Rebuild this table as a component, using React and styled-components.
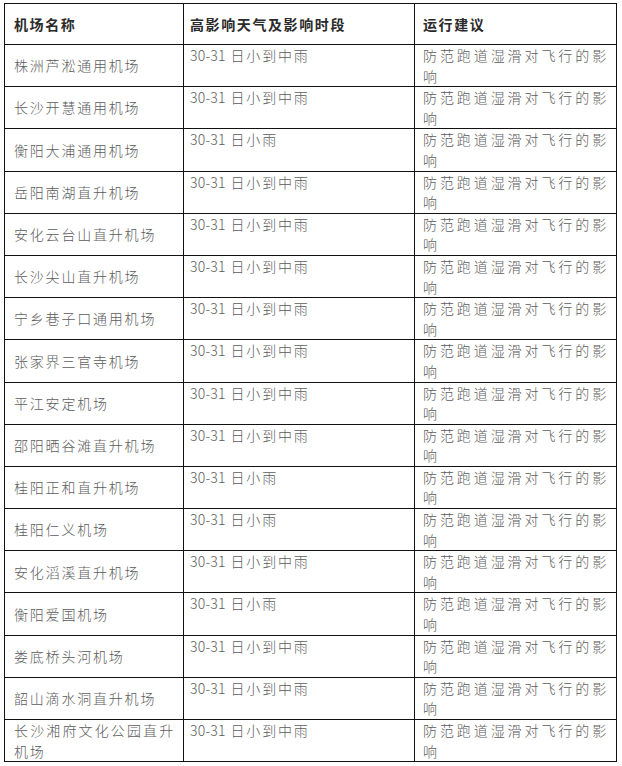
import React from "react";
import styled, { createGlobalStyle } from "styled-components";

const GlobalStyle = createGlobalStyle`
  body {
    margin: 0;
    background: #fff;
    font-family: "Noto Sans CJK SC", "Noto Sans", sans-serif;
  }
`;

const Page = styled.div`
  padding: 3px 0 0 4px;
`;

const Table = styled.table`
  border-collapse: collapse;
  table-layout: fixed;
  width: 612px;
`;

const Col = styled.col`
  width: ${(p) => p.$w}px;
`;

const HeadCell = styled.th`
  border: 1px solid #111;
  height: 40px;
  padding: 0 ${(p) => p.$pad || 8}px;
  text-align: left;
  vertical-align: middle;
  font-size: 14px;
  font-weight: 700;
  letter-spacing: 1.6px;
  color: #2a2a2a;
  line-height: 20.6px;
`;

const Cell = styled.td`
  border: 1px solid #111;
  padding: 0 8px 0 ${(p) => p.$pad || 8}px;
  vertical-align: ${(p) => (p.$middle ? "middle" : "top")};
  font-size: 14px;
  font-weight: 300;
  letter-spacing: 1.8px;
  line-height: 20.6px;
  color: #5c5c5c;
  text-align: justify;
  text-justify: inter-character;
  height: 41.2px;
  word-break: break-all;
`;

const Digits = styled.span`
  letter-spacing: 0.2px;
`;

const rows = [
  ["株洲芦淞通用机场", "小到中雨"],
  ["长沙开慧通用机场", "小到中雨"],
  ["衡阳大浦通用机场", "小雨"],
  ["岳阳南湖直升机场", "小到中雨"],
  ["安化云台山直升机场", "小到中雨"],
  ["长沙尖山直升机场", "小到中雨"],
  ["宁乡巷子口通用机场", "小到中雨"],
  ["张家界三官寺机场", "小到中雨"],
  ["平江安定机场", "小到中雨"],
  ["邵阳晒谷滩直升机场", "小到中雨"],
  ["桂阳正和直升机场", "小雨"],
  ["桂阳仁义机场", "小雨"],
  ["安化滔溪直升机场", "小到中雨"],
  ["衡阳爱国机场", "小雨"],
  ["娄底桥头河机场", "小到中雨"],
  ["韶山滴水洞直升机场", "小到中雨"],
  ["长沙湘府文化公园直升机场", "小到中雨"],
];

export default function App() {
  return (
    <Page>
      <GlobalStyle />
      <Table>
        <colgroup>
          <Col $w={179} />
          <Col $w={231} />
          <Col $w={202} />
        </colgroup>
        <thead>
          <tr>
            <HeadCell $pad={9}>机场名称</HeadCell>
            <HeadCell $pad={6}>高影响天气及影响时段</HeadCell>
            <HeadCell>运行建议</HeadCell>
          </tr>
        </thead>
        <tbody>
          {rows.map(([name, weather]) => (
            <tr key={name}>
              <Cell $middle $pad={9}>
                {name}
              </Cell>
              <Cell $pad={6}>
                <Digits>30-31</Digits> 日{weather}
              </Cell>
              <Cell>防范跑道湿滑对飞行的影响</Cell>
            </tr>
          ))}
        </tbody>
      </Table>
    </Page>
  );
}
